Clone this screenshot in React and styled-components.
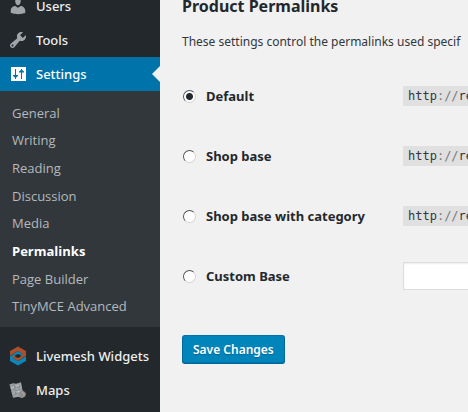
import React from "react";
import styled, { createGlobalStyle, css } from "styled-components";

const GlobalStyle = createGlobalStyle`
  *, *::before, *::after { box-sizing: border-box; }
  body {
    margin: 0;
    background: #f1f1f1;
    color: #32373c;
    font-family: "Open Sans", "Noto Sans", sans-serif;
    font-size: 13px;
    line-height: 20px;
    overflow: hidden;
  }
`;

const Page = styled.div`
  display: flex;
  height: 100vh;
  overflow: hidden;
`;

const Sidebar = styled.nav`
  flex: 0 0 160px;
  background: #23282d;
`;

const Menu = styled.ul`
  list-style: none;
  margin: -11px 0 0;
  padding: 0;
`;

const MenuItem = styled.li`
  margin-top: ${(p) => (p.$separated ? "12px" : "0")};
`;

const MenuLink = styled.a`
  position: relative;
  display: flex;
  align-items: center;
  height: 34px;
  padding-left: 8px;
  gap: 8px;
  color: ${(p) => (p.$current ? "#fff" : "#eee")};
  background: ${(p) => (p.$current ? "#0073aa" : "transparent")};
  font-family: "Noto Sans", sans-serif;
  font-size: 13px;
  font-weight: 500;
  text-decoration: none;
  white-space: nowrap;
  ${(p) =>
    p.$current &&
    css`
      &::after {
        content: "";
        position: absolute;
        right: 0;
        top: 9px;
        border: 8px solid transparent;
        border-left-width: 0;
        border-right-color: #f1f1f1;
      }
    `}
`;

const Icon = styled.svg`
  flex: none;
  width: 20px;
  height: 20px;
  fill: ${(p) => p.$fill || "#a0a5aa"};
`;

const Submenu = styled.ul`
  display: grid;
  grid-auto-rows: 1fr;
  align-items: center;
  height: 236px;
  list-style: none;
  margin: 0;
  padding: 8px 12px 7px;
  background: #32373c;
`;

const SubLink = styled.a`
  display: block;
  color: ${(p) => (p.$current ? "#fff" : "#b4b9be")};
  font-weight: ${(p) => (p.$current ? 700 : 400)};
  text-decoration: none;
  white-space: nowrap;
`;

const Content = styled.main`
  flex: 1;
  min-width: 0;
  padding: 0 0 0 22px;
  font-family: "Noto Sans", sans-serif;
  overflow: hidden;
`;

const Heading = styled.h2`
  margin: -6px 0 0;
  color: #23282d;
  font-size: 16px;
  line-height: 24px;
`;

const Description = styled.p`
  margin: 14px 0;
  font-size: 12px;
  white-space: nowrap;
`;

const Options = styled.div`
  display: grid;
  grid-auto-rows: 60px;
`;

const OptionRow = styled.div`
  display: grid;
  grid-template-columns: 221px 280px;
  align-items: center;
`;

const OptionLabel = styled.label`
  display: flex;
  align-items: center;
  gap: 10px;
  color: #23282d;
  font-weight: 700;
`;

const Radio = styled.input`
  appearance: none;
  flex: none;
  width: 13px;
  height: 13px;
  margin: 0 0 0 1px;
  border: 1px solid;
  border-color: #50565c #d4d4d4 #d4d4d4 #50565c;
  border-radius: 50%;
  background: #fff;
  &:checked {
    background: radial-gradient(circle, #23282d 3px, #fff 4px);
  }
`;

const Code = styled.code`
  justify-self: start;
  padding: 0 5px;
  background: #e0e0e0;
  font-family: "DejaVu Sans Mono", monospace;
  font-size: 12px;
  white-space: nowrap;
`;

const Punctuation = styled.span`
  color: #777b7f;
`;

const TextInput = styled.input`
  width: 280px;
  height: 28px;
  padding: 3px 5px;
  border: 1px solid #ddd;
  background: #fff;
  box-shadow: inset 0 1px 2px rgba(0, 0, 0, 0.07);
  font: inherit;
`;

const SaveButton = styled.button`
  display: block;
  height: 29px;
  margin-top: 29px;
  padding: 0 10px;
  border: 1px solid;
  border-color: #0073aa #006799 #006799;
  border-radius: 3px;
  background: #0085ba;
  box-shadow: inset 0 -1px 0 #0073aa;
  color: #fff;
  font: inherit;
  font-size: 12px;
  font-weight: 600;
  text-shadow: 0 1px 1px #006799;
  white-space: nowrap;
`;

const UsersIcon = () => (
  <Icon viewBox="0 0 20 20" aria-hidden="true">
    <path d="M10 9.25c-2.27 0-2.73-3.44-2.73-3.44C7 4.02 7.82 2 9.97 2c2.16 0 2.98 2.02 2.71 3.81 0 0-.41 3.44-2.68 3.44zm0 2.57L12.72 10c2.39 0 4.52 2.33 4.52 4.53v2.49s-3.65 1.13-7.24 1.13c-3.65 0-7.24-1.13-7.24-1.13v-2.49c0-2.25 1.94-4.48 4.47-4.48z" />
  </Icon>
);

const ToolsIcon = () => (
  <Icon viewBox="0 0 20 20" aria-hidden="true">
    <path d="M16.68 9.77c-1.34 1.34-3.3 1.67-4.95.99l-5.41 6.52c-.99.99-2.59.99-3.58 0s-.99-2.59 0-3.57l6.52-5.42c-.68-1.65-.35-3.61.99-4.95 1.28-1.28 3.12-1.62 4.72-1.06l-2.89 2.89 2.82 2.82 2.86-2.87c.53 1.58.18 3.39-1.08 4.65zM3.81 16.21c.4.39 1.04.39 1.43 0 .4-.4.4-1.04 0-1.43-.39-.4-1.03-.4-1.43 0-.39.39-.39 1.03 0 1.43z" />
  </Icon>
);

const SettingsIcon = () => (
  <Icon viewBox="0 0 20 20" $fill="#fff" aria-hidden="true">
    <rect x="3" y="3" width="15" height="14" rx=".5" />
    <path d="M7.5 5v10M13.5 5v10" stroke="#0073aa" strokeWidth="1" />
    <path d="M5 11h5v1l-2.5 2L5 12zM11 8.500h5v-1l-2.500-2-2.500 2z" fill="#0073aa" />
  </Icon>
);

const LivemeshIcon = () => (
  <Icon viewBox="0 0 20 20" aria-hidden="true">
    <path d="M10 .5 18 5v5.500l-2-1.500-6-4-5 3-3 2V5z" fill="#ad4f29" />
    <path d="M10 19.500 2 15V9.500l2 1.500 6 4 5-3 3-2v5z" fill="#0c86b8" />
    <path d="M2 10.500 10 5l6 4-2 1.500L10 8l-5.500 4z" fill="#0c86b8" />
    <path d="M18 9.500 10 15l-6-4 2-1.500 4 2.500 5.500-4z" fill="#ad4f29" />
    <ellipse cx="10" cy="10" rx="2.8" ry="1.4" fill="#23282d" />
  </Icon>
);

const MapsIcon = () => (
  <Icon viewBox="0 0 20 20" aria-hidden="true">
    <path d="M1.500 4.500 5 3.200l3 .5 5-1.500 1.500 8 3.300 3-.8 3.500-3.500 1.200-3-1.200-5.500 1z" fill="#a0a4a6" />
    <path d="M2 6l3.500-.5 1.500 2 5-1M3 11l4-2 2 2 5-2M5 16l3-3 3 1M6 4l2 12M10.500 3.500l1 7" fill="none" stroke="#7c8285" strokeDasharray="1 1" />
    <path d="M3 8l3-1M8 6l3-1M9 12l3-1" stroke="#c0c3c5" />
    <circle cx="14.500" cy="14.300" r="2.800" fill="none" stroke="#7c8285" />
    <path d="M13.500 13.500h1.200v2h-1.200z" fill="#a65a46" />
  </Icon>
);

const submenu = [
  "General",
  "Writing",
  "Reading",
  "Discussion",
  "Media",
  "Permalinks",
  "Page Builder",
  "TinyMCE Advanced",
];

const options = [
  { id: "default", label: "Default" },
  { id: "shop", label: "Shop base" },
  { id: "category", label: "Shop base with category" },
  { id: "custom", label: "Custom Base", editable: true },
];

export default function App() {
  return (
    <>
      <GlobalStyle />
      <Page>
        <Sidebar aria-label="Main menu">
          <Menu>
            <MenuItem><MenuLink href="#users"><UsersIcon />Users</MenuLink></MenuItem>
            <MenuItem><MenuLink href="#tools"><ToolsIcon />Tools</MenuLink></MenuItem>
            <MenuItem>
              <MenuLink href="#settings" $current><SettingsIcon />Settings</MenuLink>
              <Submenu>
                {submenu.map((name) => (
                  <li key={name}>
                    <SubLink href="#settings" $current={name === "Permalinks"}>{name}</SubLink>
                  </li>
                ))}
              </Submenu>
            </MenuItem>
            <MenuItem $separated><MenuLink href="#livemesh"><LivemeshIcon />Livemesh Widgets</MenuLink></MenuItem>
            <MenuItem><MenuLink href="#maps"><MapsIcon />Maps</MenuLink></MenuItem>
          </Menu>
        </Sidebar>
        <Content>
          <Heading>Product Permalinks</Heading>
          <Description>These settings control the permalinks used specif</Description>
          <Options>
            {options.map(({ id, label, editable }) => (
              <OptionRow key={id}>
                <OptionLabel>
                  <Radio type="radio" name="base" value={id} defaultChecked={id === "default"} />
                  {label}
                </OptionLabel>
                {editable ? (
                  <TextInput type="text" aria-label="Custom base" />
                ) : (
                  <Code>http<Punctuation>://</Punctuation>re</Code>
                )}
              </OptionRow>
            ))}
          </Options>
          <SaveButton type="button">Save Changes</SaveButton>
        </Content>
      </Page>
    </>
  );
}
